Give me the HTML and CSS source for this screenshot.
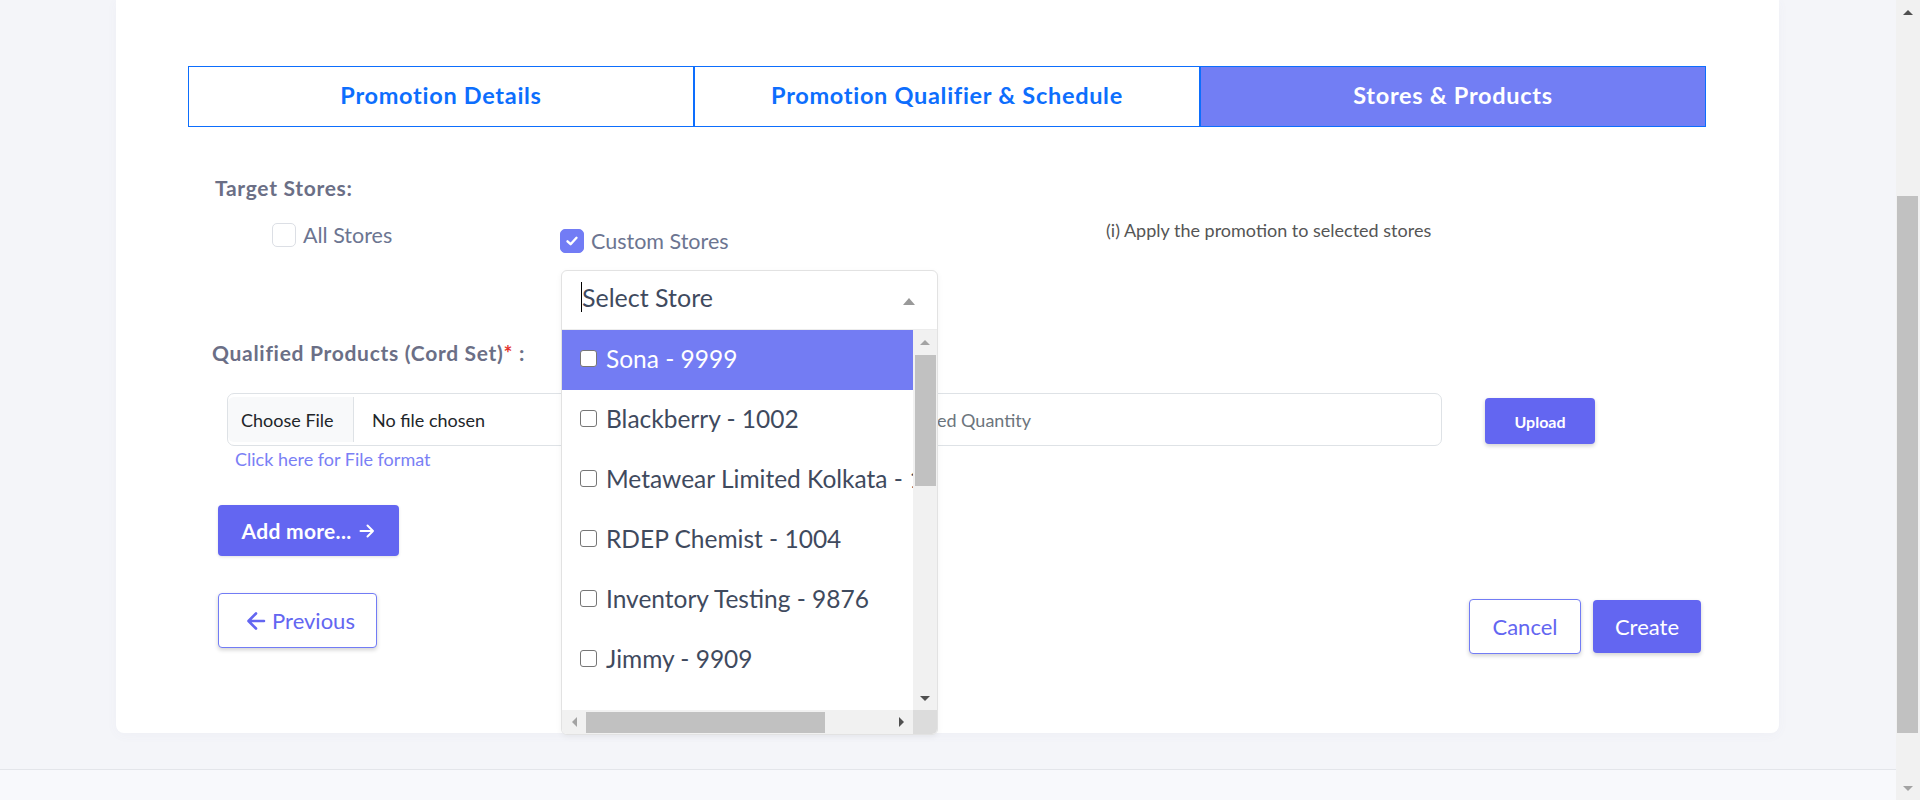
FILE: index.html
```html
<!DOCTYPE html>
<html lang="en">
<head>
<meta charset="utf-8">
<title>Stores &amp; Products</title>
<link rel="stylesheet" href="styles.css">
</head>
<body>
<div class="page">
  <main class="main">
    <section class="card">
      <nav class="tabs">
        <div class="tab">Promotion Details</div>
        <div class="tab">Promotion Qualifier &amp; Schedule</div>
        <div class="tab active">Stores &amp; Products</div>
      </nav>

      <div class="section-label target">Target Stores:</div>

      <div class="store-row">
        <label class="check check-all"><span class="box"></span>All Stores</label>
        <div class="custom-col">
          <label class="check"><span class="box checked"><svg width="14" height="14" viewBox="0 0 14 14"><path d="M2.5 7.3 L5.6 10.2 L11.5 3.8" fill="none" stroke="#fff" stroke-width="2.4" stroke-linecap="round" stroke-linejoin="round"/></svg></span>Custom Stores</label>
          <div class="dropdown">
            <div class="dd-head">
              <span class="dd-input"><span class="caret-line"></span>Select Store</span>
              <span class="tri tri-up head-tri"></span>
            </div>
            <div class="dd-body">
              <div class="dd-items">
                <div class="dd-item selected"><span class="cb"></span>Sona - 9999</div>
                <div class="dd-item"><span class="cb"></span>Blackberry - 1002</div>
                <div class="dd-item"><span class="cb"></span>Metawear Limited Kolkata - 1003</div>
                <div class="dd-item"><span class="cb"></span>RDEP Chemist - 1004</div>
                <div class="dd-item"><span class="cb"></span>Inventory Testing - 9876</div>
                <div class="dd-item"><span class="cb"></span>Jimmy - 9909</div>
                <div class="dd-item"><span class="cb"></span>Test Store - 1005</div>
              </div>
              <div class="sb-v">
                <div class="sb-btn"><span class="tri tri-up light"></span></div>
                <div class="sb-thumb-v"></div>
                <div class="sb-btn sb-end"><span class="tri tri-down"></span></div>
              </div>
              <div class="sb-h">
                <div class="sb-btn"><span class="tri tri-left light"></span></div>
                <div class="sb-thumb-h"></div>
                <div class="sb-btn sb-end-h"><span class="tri tri-right"></span></div>
              </div>
              <div class="sb-corner"></div>
            </div>
          </div>
        </div>
        <div class="info">(i) Apply the promotion to selected stores</div>
      </div>

      <div class="section-label qp">Qualified Products (Cord Set)<span class="req">*</span> :</div>

      <div class="upload-row">
        <div class="input-group">
          <span class="file-btn">Choose File</span>
          <span class="file-name">No file chosen</span>
          <span class="qty">Enter Qualified Quantity</span>
        </div>
        <button class="btn btn-upload">Upload</button>
      </div>

      <a class="format-link">Click here for File format</a>

      <button class="btn btn-add">Add more... <svg class="arr" width="16" height="14" viewBox="0 0 16 14"><path d="M1.5 7 H14 M8.5 1.5 L14 7 L8.5 12.5" fill="none" stroke="#fff" stroke-width="2" stroke-linecap="round" stroke-linejoin="round"/></svg></button>

      <div class="footer-row">
        <button class="btn btn-outline btn-prev"><svg width="20" height="20" viewBox="0 0 20 20"><path d="M18 10 H3 M10 2.5 L2.5 10 L10 17.5" fill="none" stroke="#6366f1" stroke-width="2.6" stroke-linecap="round" stroke-linejoin="round"/></svg>Previous</button>
        <div class="right-btns">
          <button class="btn btn-outline btn-cancel">Cancel</button>
          <button class="btn btn-create">Create</button>
        </div>
      </div>
    </section>
    <div class="under"></div>
    <footer class="foot"></footer>
  </main>
  <aside class="page-sb">
    <div class="sb-btn"><span class="tri tri-up"></span></div>
    <div class="page-thumb"></div>
    <div class="sb-btn sb-end"><span class="tri tri-down light"></span></div>
  </aside>
</div>
</body>
</html>
```

FILE: styles.css
```css
* { box-sizing: border-box; }
html, body { margin: 0; padding: 0; height: 800px; overflow: hidden; }
body { font-family: Lato, "Open Sans", Arial, sans-serif; background: #f4f5f9; color: #3f4a5e; }

.page { display: flex; height: 800px; }
.main { flex: 1; display: flex; flex-direction: column; background: #f4f5f9; }

.card {
  margin: 0 117px 0 116px;
  height: 733px;
  background: #fff;
  border-radius: 0 0 8px 8px;
  padding: 66px 73px 0 72px;
  box-shadow: 0 2px 12px rgba(100, 110, 150, 0.04);
}
.under { height: 36px; }
.foot { flex: 1; border-top: 1px solid #e3e5ea; background: #f8f9fc; }

/* tabs */
.tabs { display: flex; height: 61px; }
.tab {
  flex: 1;
  display: flex; align-items: center; justify-content: center;
  padding-bottom: 4px;
  border: 1px solid #0d6efd;
  color: #0d6efd;
  font-weight: 700;
  font-size: 23.5px;
  letter-spacing: 0.7px;
}
.tab.active { background: #727ef4; color: #fff; }

/* labels */
.section-label { font-size: 21px; line-height: 27px; font-weight: 700; color: #6b6f86; letter-spacing: 0.7px; }
.section-label.target { margin: 47px 0 0 27px; }
.section-label.qp { margin: 86px 0 0 24px; }
.req { color: #e3342f; }

/* store choice row */
.store-row {
  margin-top: 18px;
  display: grid;
  grid-template-columns: 288px 546px 1fr;
  padding-left: 84px;
}
.check { display: flex; align-items: center; gap: 7px; height: 24px; font-size: 21.5px; color: #6c7591; }
.check-all { margin-top: 4px; }
.custom-col { position: relative; padding-top: 10px; }
.box { width: 24px; height: 24px; border: 1px solid #dcdfe5; border-radius: 5px; background: #fff; flex: none; }
.box.checked { background: #727cf5; border-color: #727cf5; display: flex; align-items: center; justify-content: center; }
.info { padding-top: 0; font-size: 18px; line-height: 22px; color: #555; }

/* dropdown */
.dropdown {
  position: absolute;
  left: 1px; top: 51px;
  width: 377px; height: 465px;
  background: #fff;
  border: 1px solid #e2e2e2;
  border-radius: 6px;
  overflow: hidden;
  z-index: 10;
  box-shadow: 0 2px 6px rgba(0, 0, 0, 0.05);
}
.dd-head {
  height: 59px;
  border-bottom: 1px solid #ececec;
  display: flex; align-items: center; justify-content: space-between;
  padding: 0 22px 6px 19px;
  font-size: 25px; color: #3f4a5e;
}
.dd-input { display: flex; align-items: center; }
.caret-line { width: 1px; height: 30px; background: #000; }
.head-tri { margin-top: 8px; }
.dd-body {
  display: grid;
  grid-template-columns: 351px 24px;
  grid-template-rows: 380px 24px;
}
.dd-items { overflow: hidden; }
.dd-item {
  height: 60px;
  display: flex; align-items: center; gap: 9px;
  padding: 0 0 4px 18px;
  font-size: 24.5px; white-space: nowrap;
  color: #3f4a5e;
}
.dd-item.selected { background: #737cf3; color: #fff; }
.cb { width: 17px; height: 17px; border: 1.5px solid #767676; border-radius: 3px; background: #fff; flex: none; margin-top: 1px; }

/* fake scrollbars */
.sb-v { background: #f1f1f1; display: flex; flex-direction: column; }
.sb-h { background: #f1f1f1; display: flex; }
.sb-corner { background: #dcdcdc; }
.sb-btn { width: 24px; height: 24px; flex: none; display: flex; align-items: center; justify-content: center; }
.sb-end { margin-top: auto; }
.sb-end-h { margin-left: auto; }
.sb-thumb-v { margin: 1px 1px 0 2px; height: 131px; background: #c1c1c1; }
.sb-thumb-h { margin: 2px 0 1px 0; width: 239px; background: #c1c1c1; }

.tri { width: 0; height: 0; border-style: solid; }
.tri-up { border-width: 0 5.5px 5px 5.5px; border-color: transparent transparent #505050 transparent; }
.tri-down { border-width: 5px 5.5px 0 5.5px; border-color: #505050 transparent transparent transparent; }
.tri-left { border-width: 5.5px 5px 5.5px 0; border-color: transparent #505050 transparent transparent; }
.tri-right { border-width: 5.5px 0 5.5px 5px; border-color: transparent transparent transparent #505050; }
.tri-up.light { border-bottom-color: #a3a3a3; }
.tri-down.light { border-top-color: #a3a3a3; }
.tri-left.light { border-right-color: #a3a3a3; }
.tri-up.head-tri { border-width: 0 6.5px 7px 6.5px; border-bottom-color: #999; }

/* upload row */
.upload-row { display: flex; align-items: flex-start; margin-top: 27px; padding-left: 39px; }
.input-group {
  width: 1215px; height: 53px;
  border: 1px solid #dee2e6; border-radius: 7px;
  display: flex; align-items: stretch;
  font-size: 18px;
}
.file-btn {
  width: 126px;
  margin: 3px 0;
  padding-left: 13px;
  display: flex; align-items: center;
  background: #f8f9fa;
  border-right: 1px solid #dee2e6;
  border-radius: 6px 0 0 6px;
  color: #212529;
}
.file-name { width: 474px; padding-left: 18px; display: flex; align-items: center; color: #212529; }
.qty { display: flex; align-items: center; padding-left: 10px; color: #6c757d; }

.btn {
  font-family: inherit;
  border: none;
  border-radius: 4px;
  cursor: pointer;
  display: flex; align-items: center; justify-content: center;
  box-shadow: 0 2px 4px rgba(0, 0, 0, 0.18);
}
.btn-upload {
  margin: 5px 0 0 43px;
  width: 110px; height: 46px;
  background: #6366f1; color: #fff;
  font-size: 16px; font-weight: 700;
}

.format-link { display: block; margin: 2px 0 0 47px; font-size: 18px; line-height: 22px; color: #7a80f5; }

.btn-add {
  margin: 35px 0 0 30px;
  width: 181px; height: 51px;
  background: #6366f1; color: #fff;
  font-size: 21px; font-weight: 700; letter-spacing: 0.3px;
  gap: 8px;
  box-shadow: 0 1px 3px rgba(0, 0, 0, 0.12);
}

.footer-row { display: flex; justify-content: space-between; align-items: flex-start; margin-top: 37px; padding: 0 5px 0 30px; }
.btn-outline { background: #fff; border: 1px solid #727cf5; color: #6366f1; font-size: 22px; }
.btn-prev { width: 159px; height: 55px; gap: 6px; padding-left: 12px; }
.right-btns { display: flex; align-items: flex-start; gap: 12px; }
.btn-cancel { width: 112px; height: 55px; margin-top: 6px; }
.btn-create { width: 108px; height: 53px; margin-top: 7px; background: #6366f1; color: #fff; font-size: 22px; font-weight: 400; }

/* page scrollbar */
.page-sb { width: 24px; background: #f1f1f1; display: flex; flex-direction: column; }
.page-thumb { margin: 172px 2px 0 1px; height: 537px; background: #c1c1c1; }
```
